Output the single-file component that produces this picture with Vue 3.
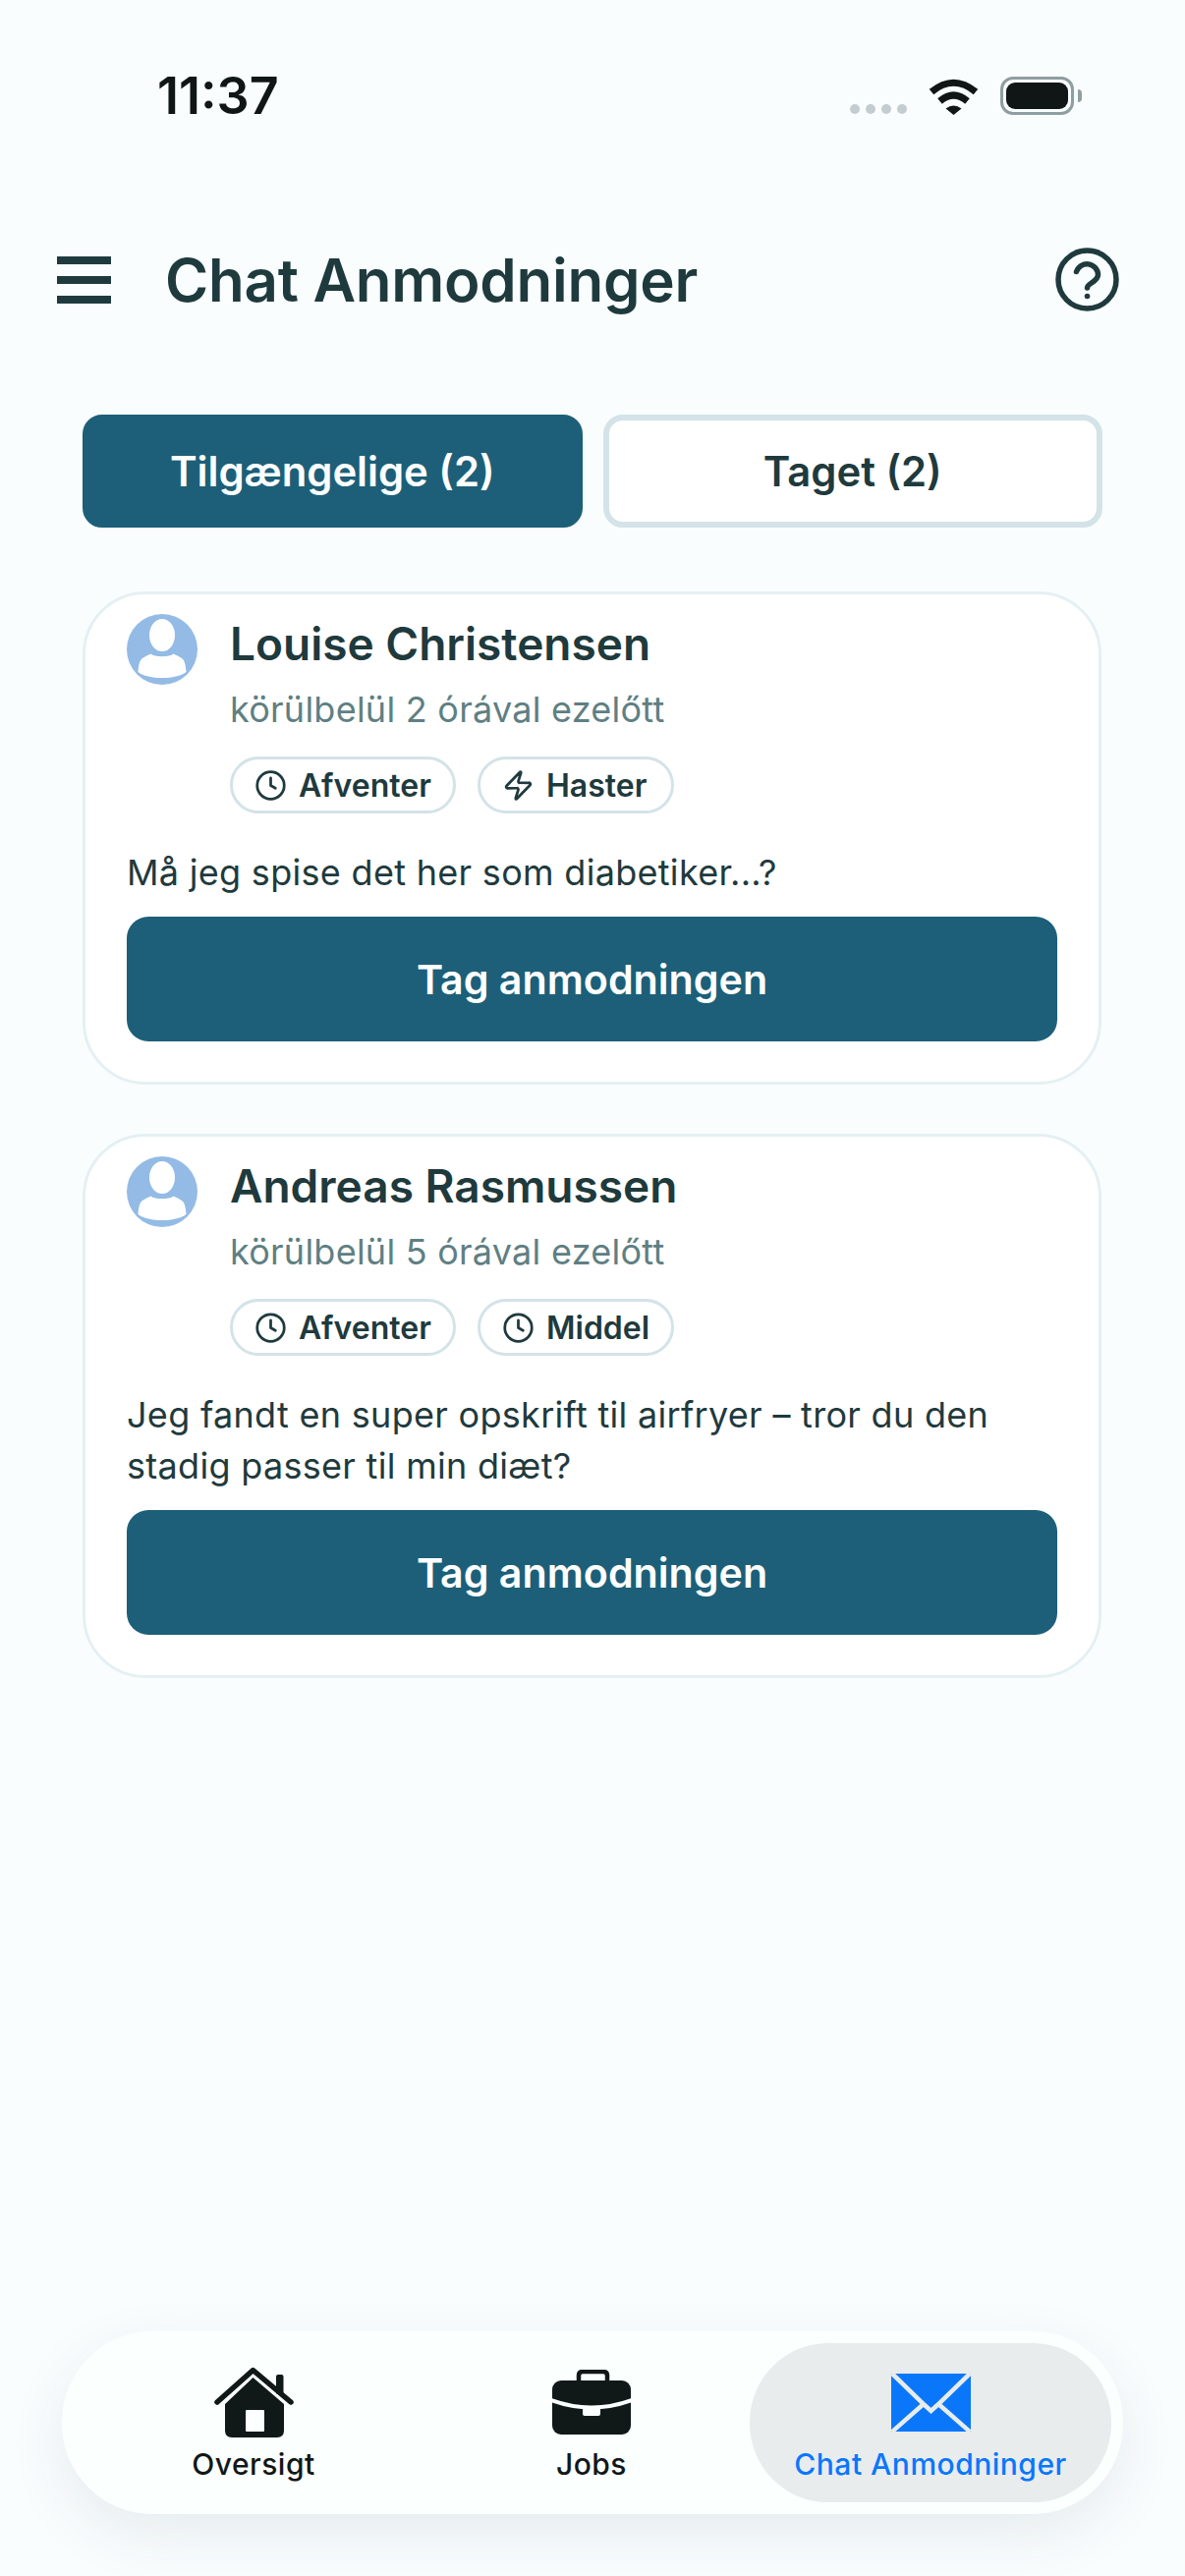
<template>
  <div class="page">
    <div class="status-bar">
      <span class="time">11:37</span>
      <div class="status-icons">
        <div class="dots"><i v-for="n in 4" :key="n"></i></div>
        <svg class="wifi" width="51" height="37" viewBox="0 0 51 37">
          <path d="M3 13.500Q25.500 -5 48 13.500" fill="none" stroke="#101616" stroke-width="7" />
          <path d="M11.500 23Q25.500 11 39.500 23" fill="none" stroke="#101616" stroke-width="7" />
          <path d="M17.500 30.500Q25.500 24.500 33.500 30.500L25.500 37Z" fill="#101616" />
        </svg>
        <div class="battery"><span></span></div>
      </div>
    </div>

    <header class="header">
      <button type="button" class="menu" aria-label="Menu"><i></i><i></i><i></i></button>
      <h1>Chat Anmodninger</h1>
      <svg class="help" width="65" height="65" viewBox="0 0 65 65" fill="none" stroke="#1f3a3d" stroke-width="5.500" stroke-linecap="round">
        <circle cx="32.500" cy="32.500" r="29.500" />
        <path d="M21.500 24.500a11.300 11.300 0 0 1 22 3c0 7.500-11 8.500-11 13.500" />
        <path d="M32.500 49.500h.05" />
      </svg>
    </header>

    <div class="tabs">
      <button type="button" class="tab active">Tilgængelige (2)</button>
      <button type="button" class="tab">Taget (2)</button>
    </div>

    <div class="cards">
      <article v-for="req in requests" :key="req.name" class="card">
        <div class="card-top">
          <svg class="avatar" width="72" height="72" viewBox="0 0 72 72">
            <circle cx="36" cy="36" r="36" fill="#93bbe5" />
            <ellipse cx="36" cy="21.500" rx="13" ry="16.500" fill="#fff" />
            <path d="M11.500 59C12 52 13 47 16 45C18 43.500 21 42 24.500 40.500C28 44 44 44 47.500 40.500C51 42 54 43.500 56 45C59 47 60 52 60.500 59C50 67 22 67 11.500 59Z" fill="#fff" />
          </svg>
          <div class="who">
            <h2>{{ req.name }}</h2>
            <p class="ago">{{ req.ago }}</p>
            <div class="chips">
              <span class="chip first">
                <svg class="chip-icon" viewBox="0 0 24 24"><circle cx="12" cy="12" r="10" /><path d="M12 6.500V12l3.500 2" /></svg>
                Afventer
              </span>
              <span class="chip second">
                <svg v-if="req.urgent" class="chip-icon" viewBox="0 0 24 24"><path d="M4 14a1 1 0 0 1-.78-1.630l9.900-10.200a.5.500 0 0 1 .860.460l-1.920 6.020A1 1 0 0 0 13 10h7a1 1 0 0 1 .780 1.630l-9.900 10.200a.5.500 0 0 1-.860-.460l1.920-6.020A1 1 0 0 0 11 14z" /></svg>
                <svg v-else class="chip-icon" viewBox="0 0 24 24"><circle cx="12" cy="12" r="10" /><path d="M12 6.500V12l3.500 2" /></svg>
                {{ req.priority }}
              </span>
            </div>
          </div>
        </div>
        <p class="message">{{ req.message }}</p>
        <button type="button" class="take">Tag anmodningen</button>
      </article>
    </div>

    <nav class="nav">
      <div class="nav-item">
        <div class="nav-icon">
          <svg width="81" height="72" viewBox="0 0 81 72">
            <path d="M39.500 11L71 38V65Q71 72 64 72H18Q11 72 11 65V38Z" fill="#111818" />
            <path d="M3 36L39.500 3.500L78 36" fill="none" stroke="#111818" stroke-width="5.500" stroke-linecap="round" stroke-linejoin="round" />
            <rect x="63" y="8" width="7.500" height="20" rx="2" fill="#111818" />
            <rect x="32" y="44" width="19" height="22" rx="1" fill="#fbfffe" />
          </svg>
        </div>
        <span>Oversigt</span>
      </div>
      <div class="nav-item">
        <div class="nav-icon">
          <svg width="80" height="66" viewBox="0 0 80 66">
            <path d="M27 12V6Q27 2 31 2H52Q56 2 56 6V12" fill="none" stroke="#111818" stroke-width="4.500" />
            <rect y="11" width="80" height="55" rx="9" fill="#111818" />
            <path d="M-1 31Q40 46 81 31" fill="none" stroke="#fbfffe" stroke-width="4" />
            <rect x="31" y="38" width="18" height="9" rx="2" fill="#fbfffe" />
          </svg>
        </div>
        <span>Jobs</span>
      </div>
      <div class="nav-item active">
        <div class="nav-icon">
          <svg width="81" height="59" viewBox="0 0 81 59">
            <rect width="81" height="59" rx="2" fill="#0a77fb" />
            <path d="M1 0L34 32L40.500 38L47 32L80 0M1 59L34 30M80 59L47 30" fill="none" stroke="#e8ecec" stroke-width="4.500" />
          </svg>
        </div>
        <span>Chat Anmodninger</span>
      </div>
    </nav>
  </div>
</template>

<script setup>
const requests = [
  {
    name: 'Louise Christensen',
    ago: 'körülbelül 2 órával ezelőtt',
    priority: 'Haster',
    urgent: true,
    message: 'Må jeg spise det her som diabetiker...?'
  },
  {
    name: 'Andreas Rasmussen',
    ago: 'körülbelül 5 órával ezelőtt',
    priority: 'Middel',
    urgent: false,
    message: 'Jeg fandt en super opskrift til airfryer – tror du den stadig passer til min diæt?'
  }
]
</script>

<style>
html,
body {
  background: #f9fdfe;
}
</style>

<style scoped>
.page {
  width: 1206px;
  height: 2622px;
  display: flex;
  flex-direction: column;
  background: #f9fdfe;
  font-family: Inter, "Liberation Sans", sans-serif;
  color: #1f3a3d;
  overflow: hidden;
}

.status-bar {
  display: flex;
  justify-content: space-between;
  align-items: center;
  height: 39px;
  padding: 78px 113px 0 160px;
}

.time {
  font-size: 52px;
  font-weight: 600;
  color: #101616;
}

.status-icons {
  display: flex;
  align-items: flex-end;
}

.dots {
  display: flex;
  gap: 6px;
  margin-bottom: 1px;
  margin-right: 22px;
}

.dots i {
  width: 10px;
  height: 10px;
  border-radius: 50%;
  background: #c3cdcf;
}

.wifi {
  margin-right: 22px;
}

.battery {
  position: relative;
  width: 75px;
  height: 39px;
  box-sizing: border-box;
  padding: 3px;
  border: 3px solid #8f9ea0;
  border-radius: 13px;
  background: #f9fdfe;
}

.battery::after {
  content: "";
  position: absolute;
  right: -11px;
  top: 10px;
  width: 4px;
  height: 13px;
  border-radius: 0 4px 4px 0;
  background: #8f9ea0;
}

.battery span {
  display: block;
  height: 100%;
  border-radius: 9px;
  background: #101616;
}

.header {
  display: flex;
  align-items: center;
  height: 65px;
  margin-top: 135px;
  padding: 0 67px 0 58px;
}

.menu {
  display: flex;
  flex-direction: column;
  gap: 12px;
  width: 55px;
  padding: 0;
  border: 0;
  background: none;
}

.menu i {
  height: 8px;
  background: #1f3a3d;
}

h1 {
  flex: 1;
  margin: 0 0 0 55px;
  font-size: 60px;
  font-weight: 600;
  letter-spacing: -0.25px;
}

.tabs {
  display: flex;
  gap: 21px;
  margin: 105px 84px 0 84px;
}

.tab {
  flex: 1;
  height: 115px;
  border: 6px solid #d3e3e8;
  border-radius: 20px;
  background: #fff;
  color: #1f3a3d;
  font: 600 41.800px Inter, sans-serif;
}

.tab.active {
  border-color: #1d5f78;
  background: #1d5f78;
  color: #fff;
}

.cards {
  display: flex;
  flex-direction: column;
  gap: 50px;
  margin: 65px 85px 0 84px;
}

.card {
  padding: 20px 42px 41px;
  border: 3px solid #e5f0f3;
  border-radius: 64px;
  background: #fff;
}

.card-top {
  display: flex;
  gap: 33px;
}

.who {
  flex: 1;
}

h2 {
  margin: 0;
  font-size: 46px;
  font-weight: 600;
  line-height: 60px;
}

.ago {
  margin: 15px 0 0;
  font-size: 36px;
  line-height: 44px;
  letter-spacing: 0.25px;
  color: #5f7f83;
}

.chips {
  display: flex;
  gap: 22px;
  margin-top: 26px;
}

.chip {
  display: flex;
  align-items: center;
  gap: 12px;
  box-sizing: border-box;
  height: 58px;
  padding-left: 22px;
  border: 3px solid #d3e3e8;
  border-radius: 29px;
  font-size: 32px;
  font-weight: 600;
}

.chip.first {
  width: 230px;
}

.chip.second {
  width: 200px;
}

.chip-icon {
  width: 33px;
  height: 33px;
  fill: none;
  stroke: #1f3a3d;
  stroke-width: 2;
  stroke-linecap: round;
  stroke-linejoin: round;
}

.message {
  margin: 34px 0 0;
  font-size: 36px;
  line-height: 52px;
  letter-spacing: 0.3px;
}

.take {
  display: block;
  width: 100%;
  height: 127px;
  margin-top: 19px;
  border: 0;
  border-radius: 22px;
  background: #1d5f78;
  color: #fff;
  font: 600 41.200px Inter, sans-serif;
}

.nav {
  display: grid;
  grid-template-columns: 366px 322px 368px;
  box-sizing: border-box;
  width: 1080px;
  height: 186px;
  margin: auto 0 63px 63px;
  padding: 12px;
  border-radius: 92px;
  background: #fbfffe;
  box-shadow: 0 20px 60px rgba(40, 60, 65, 0.09);
}

.nav-item {
  display: flex;
  flex-direction: column;
  align-items: center;
  padding-top: 24px;
  border-radius: 80px;
  color: #111818;
  font-size: 30px;
  font-weight: 500;
  letter-spacing: 0.5px;
}

.nav-item.active {
  background: #e8ecec;
  color: #0a77fb;
}

.nav-icon {
  display: flex;
  align-items: center;
  height: 72px;
  margin-bottom: 9px;
}
</style>
